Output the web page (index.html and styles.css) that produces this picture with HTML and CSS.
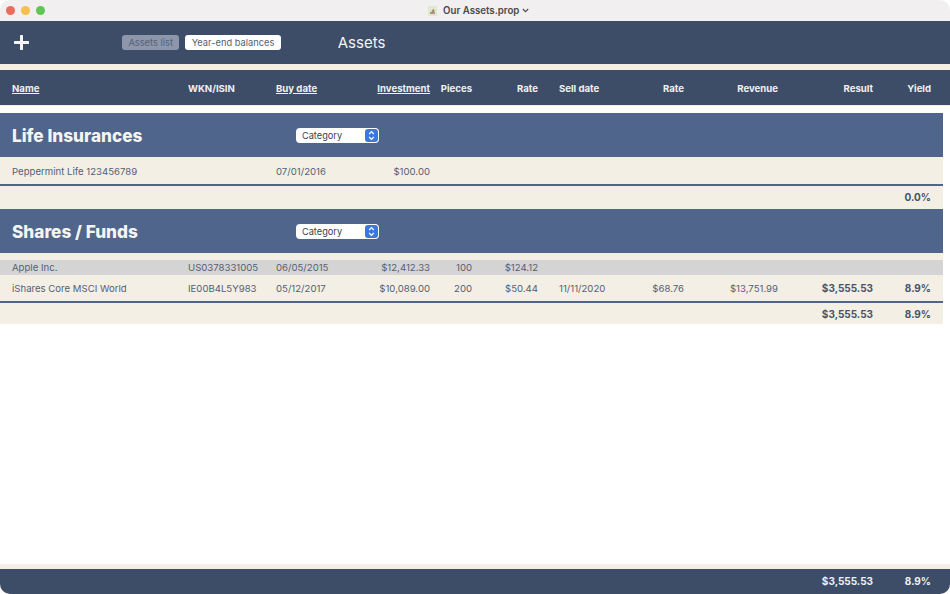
FILE: index.html
```html
<!DOCTYPE html>
<html lang="en">
<head>
  <meta charset="UTF-8">
  <title>Our Assets.prop</title>
  <link rel="stylesheet" href="styles.css">
</head>
<body>
  <div class="window">
    <div class="titlebar">
      <div class="lights">
        <span class="light red"></span>
        <span class="light yellow"></span>
        <span class="light green"></span>
      </div>
      <div class="doc">
        <svg class="doc-icon" width="9" height="10" viewBox="0 0 9 10">
          <rect width="9" height="10" fill="#dcebd0"/>
          <path d="M3 8 L4 4 L6 3 L7 8 Z" fill="#a08c78"/>
          <rect x="2" y="6" width="4" height="2" fill="#c08a7c"/>
        </svg>
        <span>Our Assets.prop</span>
        <svg class="chevron" width="7" height="5" viewBox="0 0 7 5"><path d="M0.8 1 L3.5 3.7 L6.2 1" fill="none" stroke="#4a4a4c" stroke-width="1.1"/></svg>
      </div>
    </div>

    <div class="toolbar">
      <svg class="plus" width="15" height="15" viewBox="0 0 15 15"><path d="M7.5 1 V14 M1 7.5 H14" stroke="#f4f4f2" stroke-width="3" stroke-linecap="round"/></svg>
      <div class="tabs">
        <span class="tab active">Assets list</span>
        <span class="tab">Year-end balances</span>
      </div>
      <div class="page-title">Assets</div>
    </div>

    <div class="strip"></div>

    <div class="cols head">
      <span><u>Name</u></span>
      <span>WKN/ISIN</span>
      <span><u>Buy date</u></span>
      <span class="r"><u>Investment</u></span>
      <span class="r">Pieces</span>
      <span class="r">Rate</span>
      <span class="sell">Sell date</span>
      <span class="r">Rate</span>
      <span class="r">Revenue</span>
      <span class="r">Result</span>
      <span class="r">Yield</span>
    </div>

    <div class="content">
      <div class="group-head">
        <h2>Life Insurances</h2>
        <div class="select">Category<span class="stepper"><svg width="7" height="11" viewBox="0 0 7 11"><path d="M1.2 4 L3.5 1.7 L5.8 4 M1.2 7 L3.5 9.3 L5.8 7" fill="none" stroke="#fff" stroke-width="1.2"/></svg></span></div>
      </div>
      <div class="cols row tall">
        <span>Peppermint Life 123456789</span>
        <span></span>
        <span>07/01/2016</span>
        <span class="r">$100.00</span>
        <span></span><span></span><span></span><span></span><span></span><span></span><span></span>
      </div>
      <div class="cols row total first">
        <span></span><span></span><span></span><span></span><span></span><span></span><span></span><span></span><span></span><span></span>
        <span class="r b">0.0%</span>
      </div>

      <div class="group-head">
        <h2>Shares / Funds</h2>
        <div class="select">Category<span class="stepper"><svg width="7" height="11" viewBox="0 0 7 11"><path d="M1.2 4 L3.5 1.7 L5.8 4 M1.2 7 L3.5 9.3 L5.8 7" fill="none" stroke="#fff" stroke-width="1.2"/></svg></span></div>
      </div>
      <div class="gap"></div>
      <div class="cols row open">
        <span>Apple Inc.</span>
        <span>US0378331005</span>
        <span>06/05/2015</span>
        <span class="r">$12,412.33</span>
        <span class="r">100</span>
        <span class="r">$124.12</span>
        <span></span><span></span><span></span><span></span><span></span>
      </div>
      <div class="cols row sold">
        <span>iShares Core MSCI World</span>
        <span>IE00B4L5Y983</span>
        <span>05/12/2017</span>
        <span class="r">$10,089.00</span>
        <span class="r">200</span>
        <span class="r">$50.44</span>
        <span class="sell">11/11/2020</span>
        <span class="r">$68.76</span>
        <span class="r">$13,751.99</span>
        <span class="r b">$3,555.53</span>
        <span class="r b">8.9%</span>
      </div>
      <div class="cols row total">
        <span></span><span></span><span></span><span></span><span></span><span></span><span></span><span></span><span></span>
        <span class="r b">$3,555.53</span>
        <span class="r b">8.9%</span>
      </div>
    </div>

    <div class="footer-strip"></div>
    <div class="cols foot">
      <span></span><span></span><span></span><span></span><span></span><span></span><span></span><span></span><span></span>
      <span class="r b">$3,555.53</span>
      <span class="r b">8.9%</span>
    </div>
  </div>
</body>
</html>
```

FILE: styles.css
```css
* {
  box-sizing: border-box;
}

html, body {
  margin: 0;
  height: 100%;
  background: #fff;
}

body {
  font-family: Inter, "Liberation Sans", sans-serif;
  font-size: 9.6px;
  color: #556074;
  overflow: hidden;
}

.window {
  height: 594px;
  display: flex;
  flex-direction: column;
  background: #fff;
  border-radius: 10px;
  overflow: hidden;
}

.titlebar {
  height: 21px;
  flex: none;
  display: flex;
  align-items: center;
  background: #f1eff0;
}

.lights {
  display: flex;
  gap: 6px;
  padding-left: 6px;
}

.light {
  width: 9px;
  height: 9px;
  border-radius: 50%;
}
.light.red { background: #ec6a5e; }
.light.yellow { background: #f4bf4f; }
.light.green { background: #61c554; }

.doc {
  margin-left: 383px;
  display: flex;
  align-items: center;
  gap: 6px;
  font-size: 9.7px;
  font-weight: 600;
  color: #4a4a4c;
}

.chevron {
  margin-left: -3px;
}

.toolbar {
  height: 43px;
  flex: none;
  display: flex;
  align-items: center;
  background: #3d4d68;
  padding-left: 14px;
}

.plus {
  flex: none;
}

.tabs {
  display: flex;
  gap: 6px;
  margin-left: 93px;
}

.tab {
  height: 15px;
  line-height: 15px;
  padding: 0 6.4px;
  background: #fff;
  border-radius: 3px;
  color: #556074;
  font-size: 9.3px;
}

.tab.active {
  background: #8d96aa;
  color: #56627a;
}

.page-title {
  margin-left: 57px;
  font-size: 15px;
  color: #f4f4f2;
}

.strip {
  height: 6px;
  flex: none;
  background: #f3efe4;
}

.cols {
  display: grid;
  grid-template-columns: 176px 88px 76px 78px 42px 66px 102px 44px 94px 95px 58px;
  align-items: center;
  padding-left: 12px;
}

.r {
  text-align: right;
}

.b {
  font-size: 10px;
  font-weight: 700;
  color: #46536b;
}

.sell {
  padding-left: 21px;
}

.head {
  height: 36px;
  flex: none;
  padding-top: 1px;
  background: #3d4d68;
  color: #f0f0ee;
  font-weight: 700;
  border-bottom: 1px solid #f3efe4;
}

.content {
  flex: 1;
  width: 943px;
  padding-top: 7px;
}

.group-head {
  height: 44px;
  display: flex;
  align-items: center;
  background: #50658c;
  padding-left: 12px;
}

.group-head h2 {
  margin: 0;
  width: 284px;
  font-size: 17.2px;
  font-weight: 800;
  color: #f4f4f2;
}

.select {
  width: 83px;
  height: 15px;
  padding-left: 6px;
  display: flex;
  align-items: center;
  justify-content: space-between;
  background: #fff;
  border-radius: 4px;
  color: #3c4350;
  font-size: 9.2px;
}

.stepper {
  width: 13px;
  height: 13px;
  margin-right: 1px;
  display: flex;
  align-items: center;
  justify-content: center;
  background: #3a78e0;
  border-radius: 3px;
}

.row {
  background: #f3efe4;
}

.tall {
  height: 27px;
  padding-top: 2px;
}

.total {
  height: 21px;
  border-top: 2px solid #50658c;
  box-sizing: content-box;
}

.total.first {
  height: 22px;
  padding-bottom: 1px;
}

.gap {
  height: 7px;
  background: #f3efe4;
}

.open {
  height: 15px;
  background: #d4d4d4;
}

.sold {
  height: 26px;
}

.footer-strip {
  height: 5px;
  flex: none;
  background: #f3efe4;
}

.foot {
  height: 25px;
  flex: none;
  padding-bottom: 1px;
  background: #3d4d68;
}

.foot .b {
  color: #f0f0ee;
}
```
